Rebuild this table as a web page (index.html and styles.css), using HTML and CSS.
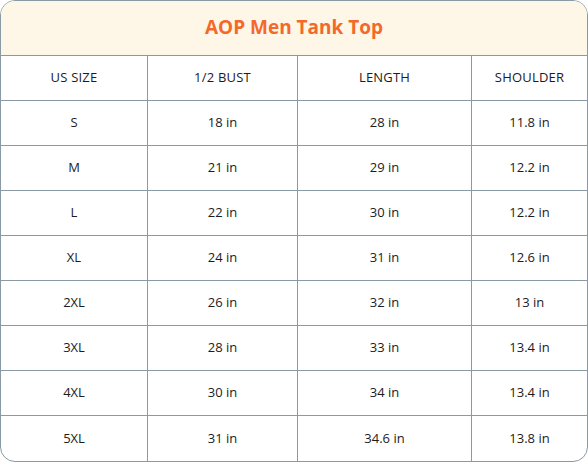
FILE: index.html
```html
<!DOCTYPE html>
<html lang="en">
<head>
  <meta charset="UTF-8">
  <meta name="viewport" content="width=device-width, initial-scale=1.0">
  <link rel="stylesheet" href="styles.css">
</head>
<body>
  <div class="size-chart">
    <h2 class="chart-title">AOP Men Tank Top</h2>
    <div class="chart-grid">
      <div class="cell head">US SIZE</div>
      <div class="cell head">1/2 BUST</div>
      <div class="cell head">LENGTH</div>
      <div class="cell head">SHOULDER</div>

      <div class="cell">S</div>
      <div class="cell">18 in</div>
      <div class="cell">28 in</div>
      <div class="cell">11.8 in</div>

      <div class="cell">M</div>
      <div class="cell">21 in</div>
      <div class="cell">29 in</div>
      <div class="cell">12.2 in</div>

      <div class="cell">L</div>
      <div class="cell">22 in</div>
      <div class="cell">30 in</div>
      <div class="cell">12.2 in</div>

      <div class="cell">XL</div>
      <div class="cell">24 in</div>
      <div class="cell">31 in</div>
      <div class="cell">12.6 in</div>

      <div class="cell">2XL</div>
      <div class="cell">26 in</div>
      <div class="cell">32 in</div>
      <div class="cell">13 in</div>

      <div class="cell">3XL</div>
      <div class="cell">28 in</div>
      <div class="cell">33 in</div>
      <div class="cell">13.4 in</div>

      <div class="cell">4XL</div>
      <div class="cell">30 in</div>
      <div class="cell">34 in</div>
      <div class="cell">13.4 in</div>

      <div class="cell last">5XL</div>
      <div class="cell last">31 in</div>
      <div class="cell last">34.6 in</div>
      <div class="cell last">13.8 in</div>
    </div>
  </div>
</body>
</html>
```

FILE: styles.css
```css
* {
  box-sizing: border-box;
}

body {
  margin: 0;
  background: #ffffff;
  font-family: "Open Sans", "Noto Sans", sans-serif;
}

/* 外框 */
.size-chart {
  width: 588px;
  border: 1px solid #8a9aa4;
  border-radius: 15px;
  overflow: hidden;
  background: #ffffff;
}

.chart-title {
  margin: 0;
  height: 55px;
  padding-bottom: 2px;
  display: flex;
  align-items: center;
  justify-content: center;
  background: #fef7e7;
  border-bottom: 1px solid #8a9aa4;
  color: #f4692b;
  font-size: 19px;
  font-weight: 700;
}

/* 表格 */
.chart-grid {
  display: grid;
  grid-template-columns: 147px 150px 174px 1fr;
}

.cell {
  height: 45px;
  padding-bottom: 2px;
  display: flex;
  align-items: center;
  justify-content: center;
  border-right: 1px solid #8a9aa4;
  border-bottom: 1px solid #8a9aa4;
  font-size: 13px;
  color: #1c1c1c;
}

.cell.head {
  letter-spacing: 0.2px;
}

.cell:nth-child(4n) {
  border-right: none;
}

.cell.last {
  border-bottom: none;
}
```
